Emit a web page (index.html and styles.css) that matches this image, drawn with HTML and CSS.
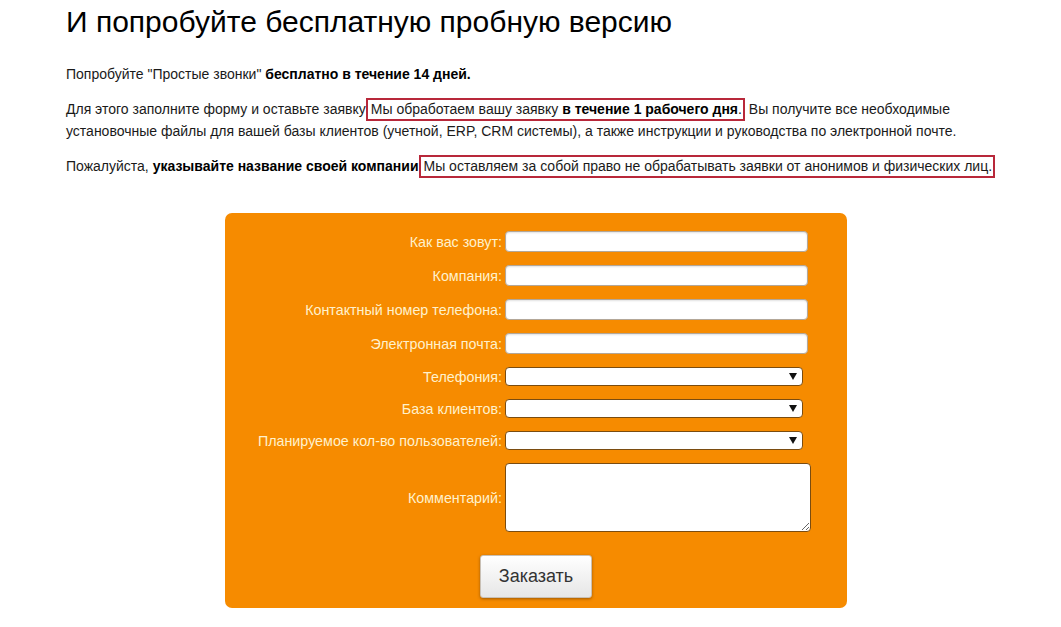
FILE: index.html
```html
<!DOCTYPE html>
<html lang="ru">
<head>
<meta charset="utf-8">
<title>Пробная версия</title>
<link rel="stylesheet" href="styles.css">
</head>
<body>
<div class="page">
  <h1 class="title">И попробуйте бесплатную пробную версию</h1>
  <p class="text">Попробуйте "Простые звонки" <b>бесплатно в течение 14 дней.</b></p>
  <p class="text">Для этого заполните форму и оставьте заявку<span class="mark">Мы обработаем вашу заявку <b>в течение 1 рабочего дня</b>.</span> Вы получите все необходимые установочные файлы для вашей базы клиентов (учетной, ERP, CRM системы), а также инструкции и руководства по электронной почте.</p>
  <p class="text">Пожалуйста, <b>указывайте название своей компании</b><span class="mark">Мы оставляем за собой право не обрабатывать заявки от анонимов и физических лиц.</span></p>

  <form class="order">
    <div class="grid">
      <label class="lbl">Как вас зовут:</label>
      <input class="field" type="text">
      <label class="lbl">Компания:</label>
      <input class="field" type="text">
      <label class="lbl">Контактный номер телефона:</label>
      <input class="field" type="text">
      <label class="lbl">Электронная почта:</label>
      <input class="field" type="text">
      <label class="lbl">Телефония:</label>
      <div class="selwrap"><select class="sel"><option></option></select></div>
      <label class="lbl">База клиентов:</label>
      <div class="selwrap"><select class="sel"><option></option></select></div>
      <label class="lbl">Планируемое кол-во пользователей:</label>
      <div class="selwrap"><select class="sel"><option></option></select></div>
      <label class="lbl">Комментарий:</label>
      <textarea class="area"></textarea>
    </div>
    <div class="actions">
      <button class="btn" type="button">Заказать</button>
    </div>
  </form>
</div>
</body>
</html>
```

FILE: styles.css
```css
html, body {
  margin: 0;
  padding: 0;
  background: #ffffff;
}

body {
  font-family: "Liberation Sans", Arial, sans-serif;
  color: #1a1a1a;
}

.page {
  padding: 0 0 0 66px;
}

.title {
  margin: 0;
  padding-top: 4px;
  font-size: 30px;
  line-height: 36px;
  font-weight: normal;
  color: #000;
}

.text {
  width: 940px;
  margin: 0 0 13px 0;
  font-size: 14px;
  line-height: 22px;
}

.title + .text {
  margin-top: 23px;
}

.text b {
  font-weight: bold;
  color: #000;
}

.mark {
  border: 2px solid #b8283a;
  padding: 1px 1px 2px 3px;
  margin-left: 0;
}

.order {
  margin: 36px 0 0 159px;
  width: 622px;
  box-sizing: border-box;
  background: #f68b00;
  border-radius: 7px;
  padding: 18px 0 10px 0;
}

.grid {
  display: grid;
  grid-template-columns: 277px 306px;
  column-gap: 3px;
  row-gap: 13px;
  align-items: center;
}

.lbl {
  text-align: right;
  font-size: 14.3px;
  color: #fff1cc;
  white-space: nowrap;
}

.field {
  box-sizing: border-box;
  width: 303px;
  height: 21px;
  margin: 0;
  border: 1px solid #b3a798;
  border-radius: 4px;
  background: #fff;
  box-shadow: inset 0 1px 2px rgba(0, 0, 0, 0.12);
  padding: 0 4px;
  font: 13px "Liberation Sans", Arial, sans-serif;
}

.selwrap {
  position: relative;
  width: 298px;
  height: 19px;
}

.sel {
  box-sizing: border-box;
  width: 298px;
  height: 19px;
  margin: 0;
  border: 1px solid #7a4c10;
  border-radius: 4px;
  background: #fff;
  appearance: none;
  -webkit-appearance: none;
  padding: 0 4px;
  font: 13px "Liberation Sans", Arial, sans-serif;
}

.selwrap::after {
  content: "";
  position: absolute;
  right: 6px;
  top: 6px;
  border-left: 4px solid transparent;
  border-right: 4px solid transparent;
  border-top: 7px solid #111;
  pointer-events: none;
}

.area {
  box-sizing: border-box;
  width: 306px;
  height: 69px;
  margin: 0;
  border: 1px solid #7a4c10;
  border-radius: 4px;
  background: #fff;
  font: 13px "Liberation Sans", Arial, sans-serif;
}

.actions {
  display: flex;
  justify-content: center;
  margin-top: 23px;
}

.btn {
  width: 112px;
  height: 43px;
  border: 1px solid #c9c0b5;
  border-radius: 3px;
  background: linear-gradient(#ffffff, #e6e6e6);
  box-shadow: 0 1px 3px rgba(90, 50, 0, 0.55);
  font: 18px "Liberation Sans", Arial, sans-serif;
  color: #333;
  padding: 0;
}
```
